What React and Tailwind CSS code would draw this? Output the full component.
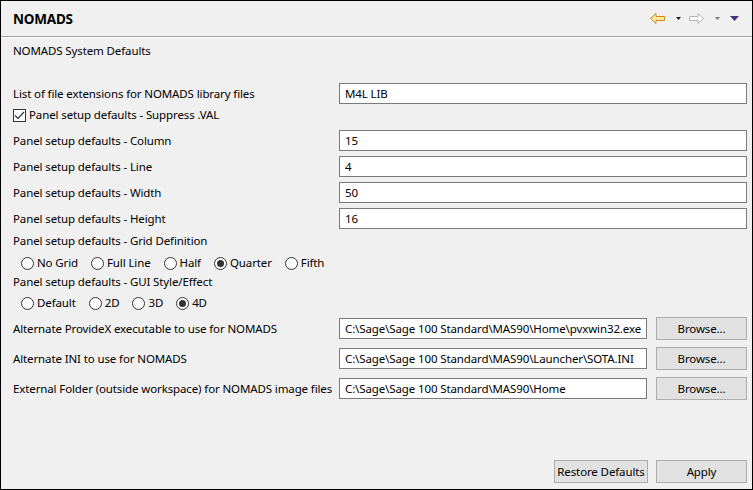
import React from 'react'

// ─── Petits contrôles façon Windows ─────────────────────────────────────────

function Field({ value, className = '' }) {
  return (
    <div className={`h-[21px] bg-white border border-[#7a7a7a] pl-[5px] flex items-center text-black whitespace-nowrap overflow-hidden ${className}`}>
      {value}
    </div>
  )
}

function Btn({ children, className = '' }) {
  return (
    <div className={`h-[23px] bg-[#e1e1e1] border border-[#adadad] flex items-center justify-center text-black whitespace-nowrap ${className}`}>
      {children}
    </div>
  )
}

function Radio({ label, checked }) {
  return (
    <div className="flex items-center">
      <span className="w-[13px] h-[13px] rounded-full border border-[#333] bg-white flex items-center justify-center">
        {checked && <span className="w-[7px] h-[7px] rounded-full bg-[#333]" />}
      </span>
      <span className="ml-[3px]">{label}</span>
    </div>
  )
}

function Row({ label, value }) {
  return (
    <div className="flex items-center">
      <div className="w-[326px] shrink-0">{label}</div>
      <Field value={value} className="flex-1" />
    </div>
  )
}

function BrowseRow({ label, value }) {
  return (
    <div className="flex items-center h-[23px]">
      <div className="w-[326px] shrink-0 whitespace-nowrap">{label}</div>
      <Field value={value} className="w-[308px]" />
      <Btn className="w-[91px] ml-[9px]">Browse...</Btn>
    </div>
  )
}

// ─── Icônes de navigation ─────────────────────────────────────────────────────

function NavIcons() {
  return (
    <div className="flex items-center">
      <svg width="15" height="11" viewBox="0 0 15 11">
        <path d="M0.5 5.5 L6 0.5 V3.5 H14.5 V7.5 H6 V10.5 Z" fill="#fde7a4" stroke="#c98a12" strokeLinejoin="round" />
      </svg>
      <svg width="5" height="3" viewBox="0 0 5 3" className="ml-[11px]">
        <path d="M0 0 H5 L2.5 3 Z" fill="#1a1a1a" />
      </svg>
      <svg width="15" height="11" viewBox="0 0 15 11" className="ml-[8px]">
        <path d="M14.5 5.5 L9 0.5 V3.5 H0.5 V7.5 H9 V10.5 Z" fill="#fafafa" stroke="#b5b5b5" strokeLinejoin="round" />
      </svg>
      <svg width="5" height="3" viewBox="0 0 5 3" className="ml-[11px]">
        <path d="M0 0 H5 L2.5 3 Z" fill="#7a7a7a" />
      </svg>
      <svg width="9" height="5" viewBox="0 0 9 5" className="ml-[10px]">
        <path d="M0 0 H9 L4.5 5 Z" fill="#4b2f7d" />
      </svg>
    </div>
  )
}

// ─── Page de préférences ──────────────────────────────────────────────────────

export default function App() {
  return (
    <div
      className="w-[753px] h-[490px] border border-black bg-[#f0f0f0] flex flex-col text-[11.5px] tracking-[-0.12px] leading-[16px] text-black"
      style={{ fontFamily: '"Noto Sans", "Open Sans", sans-serif' }}
    >
      {/* En-tête */}
      <div className="h-[36px] shrink-0 border-b border-[#a0a0a0] flex items-center justify-between pl-3 pr-[13px]">
        <span className="font-bold text-[13.5px] tracking-[-0.2px]">NOMADS</span>
        <NavIcons />
      </div>
      <div className="h-px bg-white shrink-0" />

      <div className="flex-1 flex flex-col pl-3 pr-[5px]">
        <div className="mt-[5px]">NOMADS System Defaults</div>

        <div className="mt-[24px]">
          <Row label="List of file extensions for NOMADS library files" value="M4L LIB" />
        </div>

        <div className="mt-[3px] h-[16px] flex items-center">
          <span className="w-[13px] h-[13px] border border-[#333] bg-white flex items-center justify-center">
            <svg width="11" height="9" viewBox="0 0 11 9">
              <path d="M1 4.5 L4 7.5 L10 1" fill="none" stroke="#333" strokeWidth="1.2" />
            </svg>
          </span>
          <span className="ml-[3px]">Panel setup defaults - Suppress .VAL</span>
        </div>

        <div className="mt-[7px] flex flex-col gap-[5px]">
          <Row label="Panel setup defaults - Column" value="15" />
          <Row label="Panel setup defaults - Line" value="4" />
          <Row label="Panel setup defaults - Width" value="50" />
          <Row label="Panel setup defaults - Height" value="16" />
        </div>

        <div className="mt-[4px]">Panel setup defaults - Grid Definition</div>
        <div className="mt-[6px] flex items-center gap-[13px] pl-[8px]">
          <Radio label="No Grid" />
          <Radio label="Full Line" />
          <Radio label="Half" />
          <Radio label="Quarter" checked />
          <Radio label="Fifth" />
        </div>

        <div className="mt-[3px]">Panel setup defaults - GUI Style/Effect</div>
        <div className="mt-[5px] flex items-center gap-[13px] pl-[8px]">
          <Radio label="Default" />
          <Radio label="2D" />
          <Radio label="3D" />
          <Radio label="4D" checked />
        </div>

        <div className="mt-[6px] flex flex-col gap-[7px]">
          <BrowseRow label="Alternate ProvideX executable to use for NOMADS" value="C:\Sage\Sage 100 Standard\MAS90\Home\pvxwin32.exe" />
          <BrowseRow label="Alternate INI to use for NOMADS" value="C:\Sage\Sage 100 Standard\MAS90\Launcher\SOTA.INI" />
          <BrowseRow label="External Folder (outside workspace) for NOMADS image files" value="C:\Sage\Sage 100 Standard\MAS90\Home" />
        </div>

        <div className="mt-auto mb-[6px] flex justify-end gap-[8px]">
          <Btn className="w-[94px]">Restore Defaults</Btn>
          <Btn className="w-[91px]">Apply</Btn>
        </div>
      </div>
    </div>
  )
}
